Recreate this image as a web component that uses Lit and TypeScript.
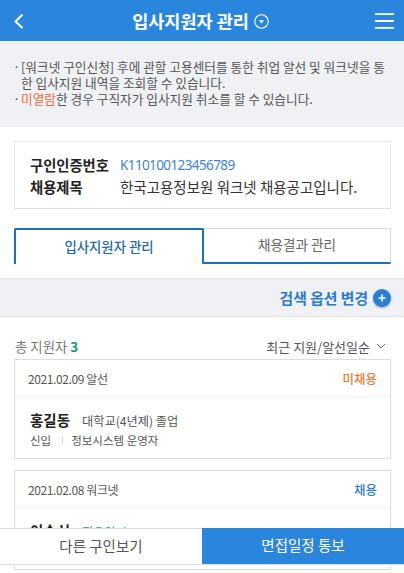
import { LitElement, html, css } from "lit";
import { customElement } from "lit/decorators.js";

@customElement("app-root")
export class AppRoot extends LitElement {
  static styles = css`
    :host { display: block; position: relative; width: 404px; height: 573px; overflow: hidden; background: #fff; font-family: "Noto Sans CJK KR", "Noto Sans", sans-serif; color: #333; }
    * { box-sizing: border-box; }
    .hdr { height: 41px; background: #2a86dc; display: flex; align-items: center; justify-content: space-between; padding: 0 10px 0 13px; color: #fff; }
    .title { display: flex; align-items: center; gap: 5px; font-size: 17.5px; font-weight: 700; line-height: 24px; margin-left: 1px; }
    .title svg { display: block; margin-top: 1px; }
    .info { height: 86px; background: #f0f1f5; padding: 18px 12px 0 13px; font-size: 12.7px; line-height: 16px; color: #555; }
    .li { position: relative; padding-left: 8px; }
    .li::before { content: "·"; position: absolute; left: 0; top: 0; }
    .or { color: #ee6b3b; }
    .job { margin: 14px 13px 0 14px; height: 68px; border: 1px solid #e9e9e9; border-bottom-color: #e0e0e0; padding: 12px 15px 0; display: grid; grid-template-columns: 90px 1fr; align-content: start; font-size: 14.5px; line-height: 22px; }
    .job b { color: #222; font-weight: 700; font-size: 14.3px; }
    .num { color: #3a85d0; font-family: "Noto Sans", sans-serif; font-size: 13.5px; letter-spacing: -0.6px; }
    .tabs { margin: 19px 13px 0 14px; height: 36px; display: flex; }
    .tab { flex: 1; display: flex; align-items: center; justify-content: center; padding-bottom: 3px; }
    .tab.on { color: #2569a8; font-weight: 500; font-size: 13.4px; border: 2px solid #1f6fb3; border-bottom: 0; border-radius: 2px 2px 0 0; }
    .tab.off { color: #666; font-size: 13.6px; border-top: 1px solid #d8d8d8; border-right: 1px solid #d8d8d8; border-bottom: 2px solid #1f6fb3; }
    .search { margin-top: 14px; height: 39px; background: #f0f1f5; border-top: 1px solid #e6e6e6; border-bottom: 1px solid #e6e6e6; display: flex; align-items: center; justify-content: flex-end; gap: 5px; padding-right: 13px; color: #2a7bc8; font-size: 14.8px; font-weight: 700; }
    .plus { width: 18px; height: 18px; border-radius: 50%; background: #2a7fd4; box-shadow: 0 1px 2px rgba(0,0,0,.35); display: block; }
    .lh { margin: 16px 18px 0 15px; height: 26px; display: flex; justify-content: space-between; align-items: center; font-size: 13.4px; color: #777; }
    .lh .n { color: #0f9a6c; font-weight: 700; }
    .sort { display: flex; align-items: center; gap: 6px; color: #555; font-size: 13px; }
    .card { margin: 0 13px 11px 14px; border: 1px solid #dcdcdc; }
    .ctop { height: 37px; border-bottom: 1px solid #f3f3f3; display: flex; justify-content: space-between; align-items: center; padding: 1px 13px 0; font-size: 12px; letter-spacing: -0.4px; color: #555; }
    .st { font-weight: 500; font-size: 12.5px; letter-spacing: 0; }
    .st.red { color: #ee7a30; }
    .st.blue { color: #2a7bc8; }
    .cbody { padding: 11px 15px 0; height: 61px; }
    .name { display: flex; align-items: baseline; gap: 12px; line-height: 24px; }
    .name b { font-size: 14.5px; font-weight: 700; color: #222; }
    .name span { font-size: 12.2px; color: #555; }
    .name span.g { color: #26a577; }
    .meta { display: flex; align-items: center; font-size: 11.5px; line-height: 15px; color: #555; }
    .meta i { width: 1px; height: 9px; background: #ddd; margin: 0 8px 0 11px; }
    .foot { position: absolute; left: 0; right: 0; top: 528px; height: 37px; display: flex; font-size: 14.5px; border-bottom: 1px solid #ddd; }
    .fb { flex: 1; display: flex; align-items: center; justify-content: center; padding-bottom: 3px; }
    .fb.l { background: #fff; color: #555; border-top: 1px solid #ddd; }
    .fb.r { background: #2a86dc; color: #fff; }
  `;

  render() {
    return html`
      <div class="hdr">
        <svg width="12" height="18" viewBox="0 0 12 18" fill="none" stroke="#fff" stroke-width="2"><path d="M9.5 2.5 2.5 9.5 9.5 16"/></svg>
        <div class="title">입사지원자 관리
          <svg width="15" height="15" viewBox="0 0 15 15"><circle cx="7.5" cy="7.5" r="6.7" fill="none" stroke="#fff" stroke-width="1.1"/><path d="M4.8 6.2h5.4L7.5 9.4z" fill="#fff"/></svg>
        </div>
        <svg width="19" height="16" viewBox="0 0 19 16" stroke="#fff" stroke-width="1.8"><path d="M0 1.2h19M0 8h19M0 14.8h19"/></svg>
      </div>
      <div class="info">
        <div class="li">[워크넷 구인신청] 후에 관할 고용센터를 통한 취업 알선 및 워크넷을 통한 입사지원 내역을 조회할 수 있습니다.</div>
        <div class="li"><span class="or">미열람</span>한 경우 구직자가 입사지원 취소를 할 수 있습니다.</div>
      </div>
      <div class="job">
        <b>구인인증번호</b><span class="num">K110100123456789</span>
        <b>채용제목</b><span>한국고용정보원 워크넷 채용공고입니다.</span>
      </div>
      <div class="tabs"><div class="tab on">입사지원자 관리</div><div class="tab off">채용결과 관리</div></div>
      <div class="search">검색 옵션 변경
        <svg class="plus" viewBox="0 0 18 18"><path d="M5.5 9h7M9 5.5v7" stroke="#fff" stroke-width="1.6"/></svg>
      </div>
      <div class="lh">
        <span>총 지원자 <span class="n">3</span></span>
        <span class="sort">최근 지원/알선일순
          <svg width="10" height="6" viewBox="0 0 10 6" fill="none" stroke="#666" stroke-width="1"><path d="M1 1l4 4 4-4"/></svg>
        </span>
      </div>
      <div class="card">
        <div class="ctop"><span>2021.02.09 알선</span><span class="st red">미채용</span></div>
        <div class="cbody">
          <div class="name"><b>홍길동</b><span>대학교(4년제) 졸업</span></div>
          <div class="meta">신입<i></i>정보시스템 운영자</div>
        </div>
      </div>
      <div class="card">
        <div class="ctop"><span>2021.02.08 워크넷</span><span class="st blue">채용</span></div>
        <div class="cbody">
          <div class="name"><b>이순신</b><span class="g">지오안시</span></div>
        </div>
      </div>
      <div class="foot"><div class="fb l">다른 구인보기</div><div class="fb r">면접일정 통보</div></div>
    `;
  }
}
